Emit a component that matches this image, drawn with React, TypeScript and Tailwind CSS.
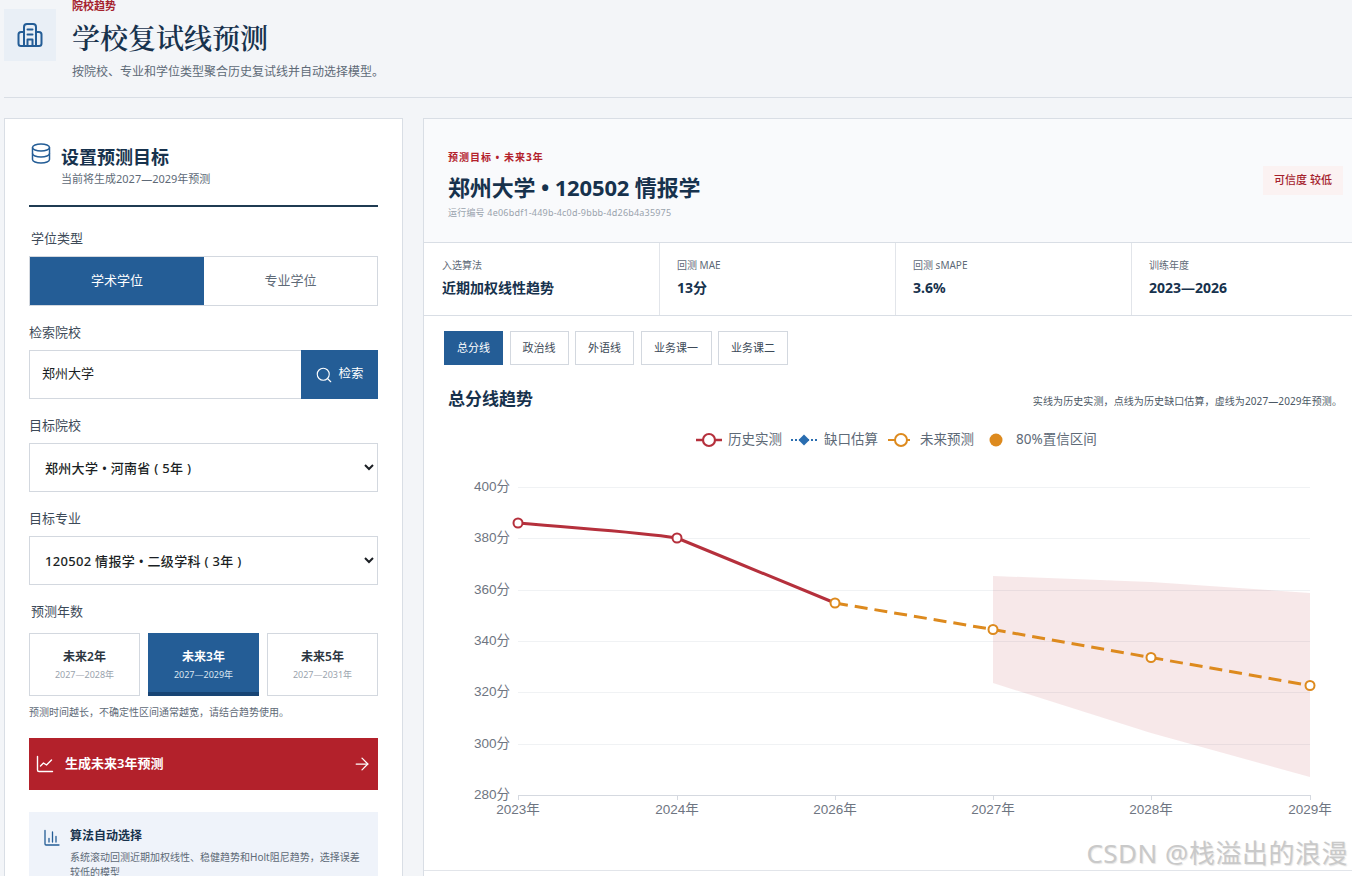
import { ArrowRight, Search } from 'lucide-react'

const metrics = [
  { label: '入选算法', value: '近期加权线性趋势' },
  { label: '回测 MAE', value: '13分' },
  { label: '回测 sMAPE', value: '3.6%' },
  { label: '训练年度', value: '2023—2026' },
]

const tabs = [
  { name: '总分线', w: 'w-[59px]' },
  { name: '政治线', w: 'w-[59px]' },
  { name: '外语线', w: 'w-[59px]' },
  { name: '业务课一', w: 'w-[71px]' },
  { name: '业务课二', w: 'w-[70px]' },
]

const years = [
  { name: '未来2年', range: '2027—2028年', active: false },
  { name: '未来3年', range: '2027—2029年', active: true },
  { name: '未来5年', range: '2027—2031年', active: false },
]

const yTicks = [
  { label: '400分', y: 487 },
  { label: '380分', y: 538 },
  { label: '360分', y: 590 },
  { label: '340分', y: 641 },
  { label: '320分', y: 692 },
  { label: '300分', y: 744 },
  { label: '280分', y: 795 },
]

const xTicks = [
  { label: '2023年', x: 518 },
  { label: '2024年', x: 677 },
  { label: '2026年', x: 835 },
  { label: '2027年', x: 993 },
  { label: '2028年', x: 1151 },
  { label: '2029年', x: 1310 },
]

function BuildingIcon() {
  return (
    <svg width="26" height="26" viewBox="0 0 26 26" fill="none" stroke="#245d96" strokeWidth="2" strokeLinejoin="round" strokeLinecap="round">
      <path d="M7 24V5a3 3 0 0 1 3-3h6a3 3 0 0 1 3 3v19" />
      <path d="M7 10H4a2.500 2.500 0 0 0-2.500 2.500v9A2.500 2.500 0 0 0 4 24h18a2.500 2.500 0 0 0 2.500-2.500v-9A2.500 2.500 0 0 0 22 10h-3" />
      <path d="M10.500 7.500h5M10.500 12.500h5M10.500 24v-6.500h5V24" />
    </svg>
  )
}

function DbIcon() {
  return (
    <svg width="20" height="21" viewBox="0 0 20 21" fill="none" stroke="#245d96" strokeWidth="1.5" className="shrink-0">
      <ellipse cx="10" cy="4.5" rx="8.5" ry="3.5" />
      <path d="M1.500 4.500v12c0 2 3.800 3.500 8.500 3.500s8.500-1.500 8.500-3.500v-12" />
      <path d="M1.500 10.500c0 2 3.800 3.500 8.500 3.500s8.500-1.500 8.500-3.500" />
    </svg>
  )
}

function TrendIcon() {
  return (
    <svg width="18" height="18" viewBox="0 0 18 18" fill="none" stroke="#ffffff" strokeWidth="1.4" strokeLinecap="round" strokeLinejoin="round" className="shrink-0">
      <path d="M1.500 1.500v13.500a1.500 1.500 0 0 0 1.500 1.500h13.500" />
      <path d="M4.500 11 7.500 8l3 2 5-5" />
    </svg>
  )
}

function BarsIcon() {
  return (
    <svg width="16" height="17" viewBox="0 0 16 17" fill="none" stroke="#245d96" strokeWidth="1.3" strokeLinecap="round" className="shrink-0">
      <path d="M1 1.500v13.500a1 1 0 0 0 1 1h13" />
      <path d="M5 9.500v3.500M8.500 3v10M12 7.500v5.500" />
    </svg>
  )
}

function FieldLabel({ children, shift }: { children: string; shift?: boolean }) {
  return <div className={`text-[13px] leading-[20px] text-[#3d4a58] ${shift ? 'pl-[2px]' : ''}`}>{children}</div>
}

function NativeSelect({ text }: { text: string }) {
  return (
    <select className="mt-[8px] h-[49px] w-full border border-[#d3d8df] bg-white pl-[11px] pr-[4px] text-[13px] font-medium tracking-[0.3px] text-[#1b1f24]">
      <option>{text}</option>
    </select>
  )
}

function Sidebar() {
  return (
    <aside className="h-[800px] w-[399px] shrink-0 border border-[#d9dee5] bg-white px-[24px] pt-[24px]">
      <div className="h-[64px] border-b-2 border-[#1f3b52]">
        <div className="flex items-start gap-[10px] pl-[2px]">
          <DbIcon />
          <div>
            <h2 className="pt-[2px] text-[18px] leading-[24px] font-bold text-[#17324d]">设置预测目标</h2>
            <p className="mt-[2px] text-[11px] leading-[16px] text-[#5e6a77]">当前将生成2027—2029年预测</p>
          </div>
        </div>
      </div>

      <div className="mt-[21px]">
        <FieldLabel shift>学位类型</FieldLabel>
        <div className="mt-[8px] flex h-[50px] border border-[#d3d8df] text-[13px]">
          <button className="w-[174px] bg-[#245d96] text-white">学术学位</button>
          <button className="flex-1 bg-white text-[#5e6a77]">专业学位</button>
        </div>
      </div>

      <div className="mt-[16px]">
        <FieldLabel>检索院校</FieldLabel>
        <div className="mt-[8px] flex h-[49px]">
          <div className="flex flex-1 items-center border border-r-0 border-[#d3d8df] pb-[2px] pl-[12px] text-[13px] text-[#1b1f24]">郑州大学</div>
          <button className="flex w-[77px] items-center justify-center gap-[5px] bg-[#245d96] text-[12.5px] text-white">
            <Search size={18} strokeWidth={1.5} />
            检索
          </button>
        </div>
      </div>

      <div className="mt-[16px]">
        <FieldLabel>目标院校</FieldLabel>
        <NativeSelect text="郑州大学 • 河南省 ( 5年 )" />
      </div>

      <div className="mt-[16px]">
        <FieldLabel>目标专业</FieldLabel>
        <NativeSelect text="120502 情报学 • 二级学科 ( 3年 )" />
      </div>

      <div className="mt-[16px]">
        <FieldLabel shift>预测年数</FieldLabel>
        <div className="mt-[12px] grid grid-cols-3 gap-[8px]">
          {years.map((y) => (
            <div
              key={y.name}
              className={`flex h-[63px] flex-col items-center justify-center ${y.active ? 'border-b-4 border-[#174474] bg-[#245d96] pt-[5px] text-white' : 'border border-[#d3d8df] bg-white pt-[1px] text-[#2b3540]'}`}
            >
              <div className="text-[12px] leading-[18px] font-semibold">{y.name}</div>
              <div className={`text-[9px] leading-[17px] ${y.active ? 'text-[#dbe6f1]' : 'text-[#9aa3ad]'}`}>{y.range}</div>
            </div>
          ))}
        </div>
        <p className="mt-[8px] text-[10px] leading-[16px] text-[#5e6a77]">预测时间越长，不确定性区间通常越宽，请结合趋势使用。</p>
      </div>

      <button className="mt-[18px] flex h-[52px] w-full items-center justify-between bg-[#b3212b] pl-[7px] pr-[6px] text-white">
        <span className="flex items-center gap-[11px] text-[13px] font-semibold">
          <TrendIcon />
          生成未来3年预测
        </span>
        <ArrowRight size={20} strokeWidth={1.5} />
      </button>

      <div className="mt-[22px] flex gap-[10px] bg-[#eff3fa] px-[15px] pt-[15px] pb-[10px]">
        <div className="pt-[2px]">
          <BarsIcon />
        </div>
        <div>
          <div className="text-[12px] leading-[18px] font-semibold text-[#17324d]">算法自动选择</div>
          <p className="mt-[5px] text-[10px] leading-[15px] text-[#5e6a77]">系统滚动回测近期加权线性、稳健趋势和Holt阻尼趋势，选择误差较低的模型</p>
        </div>
      </div>
    </aside>
  )
}

function Chart() {
  return (
    <svg width="943" height="450" viewBox="424 420 943 450" className="block">
      {/* legend */}
      <g fontSize="13.5" fill="#5e6a77">
        <path d="M696 440h26" stroke="#b5303c" strokeWidth="2.5" />
        <circle cx="709" cy="440" r="6" fill="#fff" stroke="#b5303c" strokeWidth="2.2" />
        <text x="728" y="443.5">历史实测</text>
        <path d="M791 440h26" stroke="#2a6db0" strokeWidth="2" strokeDasharray="2 2" />
        <path d="M804 434.500l5.500 5.500-5.500 5.500-5.500-5.500z" fill="#2a6db0" />
        <text x="824" y="443.5">缺口估算</text>
        <path d="M888 440h10M906 440h4" stroke="#dd8a1e" strokeWidth="2" />
        <circle cx="901" cy="440" r="6" fill="#fff" stroke="#dd8a1e" strokeWidth="2" />
        <text x="920" y="443.5">未来预测</text>
        <circle cx="996" cy="440" r="6.5" fill="#dd8a1e" />
        <text x="1016" y="443.5">80%置信区间</text>
      </g>

      {/* grid */}
      {yTicks.slice(0, 6).map((t) => (
        <path key={t.y} d={`M518 ${t.y}.5H1310`} stroke="#f0f2f4" />
      ))}
      <path d="M518 795.5H1310" stroke="#d5d9e0" />
      {xTicks.map((t) => (
        <path key={t.x} d={`M${t.x}.5 795v5`} stroke="#d5d9e0" />
      ))}
      <g fill="#6e7581" fontFamily="'Liberation Sans','Noto Sans CJK SC',sans-serif">
        {yTicks.map((t) => (
          <text key={t.y} x="510" y={t.y + 4} fontSize="13.5" textAnchor="end">{t.label}</text>
        ))}
        {xTicks.map((t) => (
          <text key={t.x} x={t.x} y="814" fontSize="13.5" textAnchor="middle">{t.label}</text>
        ))}
      </g>

      {/* confidence band */}
      <path d="M993 576L1151 582L1310 593V777L1151 733L993 683Z" fill="#b3212b" fillOpacity="0.1" />

      {/* series */}
      <path d="M518 523C600 530 640 532 677 538C730 560 780 580 835 603" fill="none" stroke="#b5303c" strokeWidth="3" />
      <path d="M835 603L993 629.5L1151 657.5L1310 685.5" fill="none" stroke="#dd8a1e" strokeWidth="3" strokeDasharray="13 7" />
      {[[518, 523], [677, 538]].map(([x, y]) => (
        <circle key={x} cx={x} cy={y} r="4.5" fill="#fff" stroke="#b5303c" strokeWidth="2" />
      ))}
      {[[835, 603], [993, 629.5], [1151, 657.5], [1310, 685.5]].map(([x, y]) => (
        <circle key={x} cx={x} cy={y} r="4.5" fill="#fff" stroke="#dd8a1e" strokeWidth="2" />
      ))}
    </svg>
  )
}

function Results() {
  return (
    <main className="h-[800px] flex-1 border-t border-l border-[#d9dee5] bg-white">
      <div className="flex h-[124px] items-start justify-between border-b border-[#d9dee5] bg-[#f9fafc] pt-[31px] pr-[24px] pl-[24px]">
        <div>
          <div className="text-[10px] leading-[14px] font-bold tracking-[1px] text-[#b3212b]">预测目标 • 未来3年</div>
          <h1 className="mt-[8px] text-[22px] leading-[30px] font-bold tracking-[-0.15px] text-[#17324d]">郑州大学 • 120502 情报学</h1>
          <div className="mt-[4px] text-[9px] leading-[14px] tracking-[0.2px] text-[#9aa3ad]">运行编号 4e06bdf1-449b-4c0d-9bbb-4d26b4a35975</div>
        </div>
        <div className="mt-[16px] flex h-[29px] w-[80px] items-center justify-center bg-[#fbf2f2] text-[11px] font-medium text-[#a5222d]">可信度 较低</div>
      </div>

      <div className="grid h-[73px] grid-cols-[235px_236px_236px_236px] border-b border-[#d9dee5]">
        {metrics.map((m, i) => (
          <div key={m.label} className={`pt-[14px] ${i === 0 ? 'pl-[18px]' : 'border-l border-[#e2e5ea] pl-[17px]'}`}>
            <div className="text-[10px] leading-[16px] text-[#5e6a77]">{m.label}</div>
            <div className="mt-[5px] text-[14px] leading-[20px] font-bold text-[#17324d]">{m.value}</div>
          </div>
        ))}
      </div>

      <div className="flex gap-[6.5px] pt-[15px] pl-[20px]">
        {tabs.map((t, i) => (
          <button
            key={t.name}
            className={`h-[34px] text-[11px] ${t.w} ${i === 0 ? 'bg-[#245d96] text-white' : 'border border-[#d3d8df] bg-white text-[#3d4a58]'}`}
          >
            {t.name}
          </button>
        ))}
      </div>

      <div className="flex items-center justify-between pt-[22px] pr-[25px] pl-[24px]">
        <h3 className="text-[17px] leading-[24px] font-bold text-[#17324d]">总分线趋势</h3>
        <p className="pt-[4px] text-[10px] leading-[16px] tracking-[0.1px] text-[#4c5865]">实线为历史实测，点线为历史缺口估算，虚线为2027—2029年预测。</p>
      </div>

      <div className="mt-[9px] border-b border-[#e2e5ea]">
        <Chart />
      </div>
    </main>
  )
}

export default function App() {
  return (
    <div className='relative h-[876px] w-[1352px] overflow-hidden bg-[#f3f5f8] font-["Noto_Sans","Noto_Sans_CJK_SC",sans-serif]'>
      <div className="w-[1371px] px-[4px]">
        <header className="flex h-[98px] gap-[16px] border-b border-[#d9dee5]">
          <div className="mt-[9px] flex h-[52px] w-[52px] shrink-0 items-center justify-center bg-[#e9eff6]">
            <BuildingIcon />
          </div>
          <div className="-mt-[2px]">
            <div className="text-[11px] leading-[16px] font-semibold text-[#a5222d]">院校趋势</div>
            <div className='mt-[7px] font-["Liberation_Serif","Noto_Serif_CJK_SC",serif] text-[28px] leading-[38px] font-semibold text-[#17324d]'>学校复试线预测</div>
            <p className="mt-[4px] text-[12px] leading-[18px] text-[#5e6a77]">按院校、专业和学位类型聚合历史复试线并自动选择模型。</p>
          </div>
        </header>
        <div className="mt-[20px] flex gap-[20px]">
          <Sidebar />
          <Results />
        </div>
      </div>
      <div className="absolute right-[4px] bottom-[7px] text-[26px] leading-[32px] tracking-[0.5px] text-[#c9c9c9] [text-shadow:1px_1px_1px_#99999944]">CSDN @栈溢出的浪漫</div>
    </div>
  )
}
